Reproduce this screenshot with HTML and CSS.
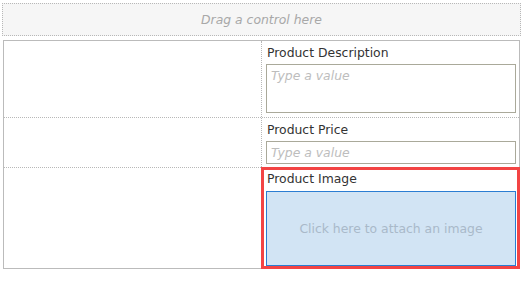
FILE: index.html
```html
<!DOCTYPE html>
<html>
<head>
    <title>Form Designer</title>
    <link rel="stylesheet" href="styles.css">
</head>
<body>
    <div class="designer">
        <div class="drop-zone">Drag a control here</div>

        <div class="form-grid">
            <div class="form-row">
                <div class="cell cell-empty"></div>
                <div class="cell cell-field">
                    <label class="field-label">Product Description</label>
                    <div class="field-input field-textarea">Type a value</div>
                </div>
            </div>
            <div class="form-row">
                <div class="cell cell-empty"></div>
                <div class="cell cell-field">
                    <label class="field-label">Product Price</label>
                    <div class="field-input">Type a value</div>
                </div>
            </div>
            <div class="form-row last">
                <div class="cell cell-empty"></div>
                <div class="cell cell-field selected">
                    <label class="field-label">Product Image</label>
                    <div class="image-drop">Click here to attach an image</div>
                </div>
            </div>
        </div>
    </div>
</body>
</html>
```

FILE: styles.css
```css
body {
    margin: 0;
    font-family: "DejaVu Sans", Verdana, sans-serif;
    font-size: 12.4px;
    color: #333;
    background-color: #fff;
}
.designer {
    padding: 3px 0 0 2px;
}
.drop-zone {
    width: 517px;
    height: 31px;
    border: 1px dotted #b8b8b8;
    background-color: #f6f6f6;
    color: #a8a8a8;
    font-style: italic;
    display: flex;
    align-items: center;
    justify-content: center;
}
.form-grid {
    width: 515px;
    margin: 4px 0 0 1px;
    border: 1px solid #bbb;
}
.form-row {
    display: flex;
    border-bottom: 1px dotted #b8b8b8;
}
.form-row.last {
    border-bottom: none;
}
.cell-empty {
    width: 257px;
    border-right: 1px dotted #b8b8b8;
}
.cell-field {
    flex: 1;
    padding: 4px 3px 4px 4px;
}
.form-row:nth-child(2) .cell-field {
    padding-bottom: 3px;
}
.field-label {
    display: block;
    line-height: 14px;
    margin: 1px 0 4px 1px;
    color: #333;
}
.field-input {
    height: 21px;
    border: 1px solid #aaa99a;
    padding: 0 4px;
    line-height: 21px;
    color: #bdbdbd;
    font-style: italic;
}
.field-textarea {
    height: 47px;
}
.cell-field.selected {
    padding: 3px 3px 2px 4px;
    outline: 3px solid #f34444;
    outline-offset: -2px;
}
.cell-field.selected .field-label {
    margin-bottom: 5px;
}
.image-drop {
    height: 73px;
    border: 1px solid #2b7dd2;
    background-color: #d2e4f4;
    color: #a9b9c9;
    display: flex;
    align-items: center;
    justify-content: center;
}
```
